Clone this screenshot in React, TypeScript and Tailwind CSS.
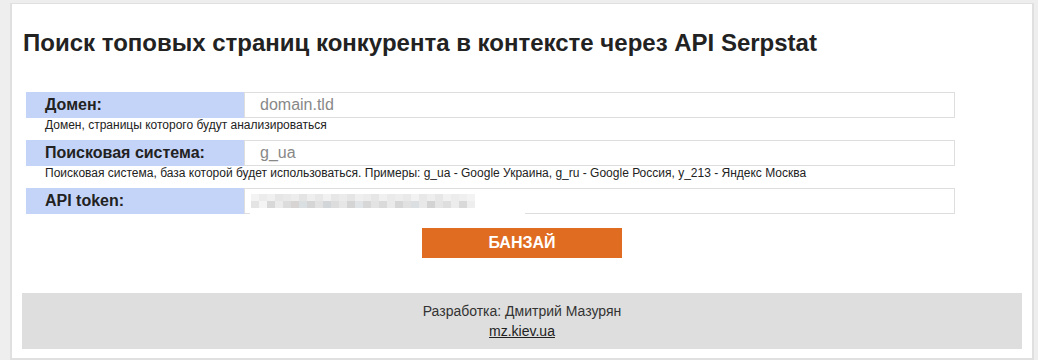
import React from "react";

const blurTop = ["#f3f3f3","#ececec","#f0f0f0","#e6e6e6","#e9e9e9","#ededed","#e4e4e4","#eeeeee","#e8e8e8","#f1f1f1","#e7e7e7","#ebebeb","#e5e5e5","#efefef","#ececec","#e6e6e6","#f0f0f0","#eaeaea","#ededed","#e9e9e9","#f2f2f2","#e8e8e8","#eeeeee","#e7e7e7","#f1f1f1","#ececec","#efefef","#f3f3f3"];
const blurBot = ["#e4e4e4","#f4f4f4","#d8d8d8","#ebebeb","#dcdcdc","#d9d4d4","#dadfe2","#d5d5d5","#e2e2e2","#d2d6d8","#dddddd","#e6e6e6","#d4d4d4","#e0e4e6","#d7d7d7","#e3e3e3","#dadada","#eaeaea","#d6d6d6","#e1e1e1","#dbdfe1","#e8e8e8","#d3d3d3","#e5e5e5","#dedede","#ececec","#d9d9d9","#eeeeee"];

function Row({ label, placeholder, token }: { label: string; placeholder?: string; token?: boolean }) {
  return (
    <div className="flex h-[26px]">
      <div className="w-[218px] shrink-0 bg-[#c4d4f8] pl-[19px] flex items-center text-[16px] font-bold text-[#222]">
        {label}
      </div>
      <div className="relative flex-1 border border-[#dedede] bg-white flex items-center pl-[15px]">
        {token ? (
          <>
            <div className="flex flex-col ml-[-9px]">
              <div className="flex">
                {blurTop.map((c, i) => (
                  <div key={i} className="w-[8px] h-[7px]" style={{ backgroundColor: c }} />
                ))}
              </div>
              <div className="flex">
                {blurBot.map((c, i) => (
                  <div key={i} className="w-[8px] h-[7px]" style={{ backgroundColor: c }} />
                ))}
              </div>
            </div>
            <div className="absolute left-[5px] bottom-[-1px] w-[275px] h-[4px] bg-white" />
          </>
        ) : (
          <input
            className="w-full outline-none bg-transparent text-[16px] text-[#888] placeholder:text-[#888]"
            placeholder={placeholder}
          />
        )}
      </div>
    </div>
  );
}

function Hint({ children }: { children: React.ReactNode }) {
  return <div className="pl-[19px] h-[14px] leading-[14px] text-[12px] text-[#222] mb-[8px] mt-[0px]">{children}</div>;
}

export default function App() {
  return (
    <div className="min-h-[360px] bg-[#eeeeee] pt-[3px] pl-[10px] pr-[4px] overflow-hidden" style={{ fontFamily: '"Liberation Sans", Arial, sans-serif' }}>
      <div className="bg-white border-2 border-[#e0e0e0] border-t border-b-2 px-[10px] pb-[9px]">
        <h1 className="mt-[25px] text-[24px] leading-[28px] font-bold text-[#222] ml-[1px]">
          Поиск топовых страниц конкурента в контексте через API Serpstat
        </h1>
        <div className="mt-[35px] ml-[4px] w-[929px]">
          <Row label="Домен:" placeholder="domain.tld" />
          <Hint>Домен, страницы которого будут анализироваться</Hint>
          <Row label="Поисковая система:" placeholder="g_ua" />
          <Hint>Поисковая система, база которой будет использоваться. Примеры: g_ua - Google Украина, g_ru - Google Россия, y_213 - Яндекс Москва</Hint>
          <Row label="API token:" token />
        </div>
        <div className="flex justify-center mt-[14px]">
          <button className="w-[200px] h-[30px] bg-[#e06c22] text-white font-bold text-[16px]">БАНЗАЙ</button>
        </div>
        <div className="mt-[35px] bg-[#dedede] py-[8px] text-center text-[14px] leading-[20px] text-[#333]">
          <div>Разработка: Дмитрий Мазурян</div>
          <div><a className="underline text-[#222]">mz.kiev.ua</a></div>
        </div>
      </div>
    </div>
  );
}
